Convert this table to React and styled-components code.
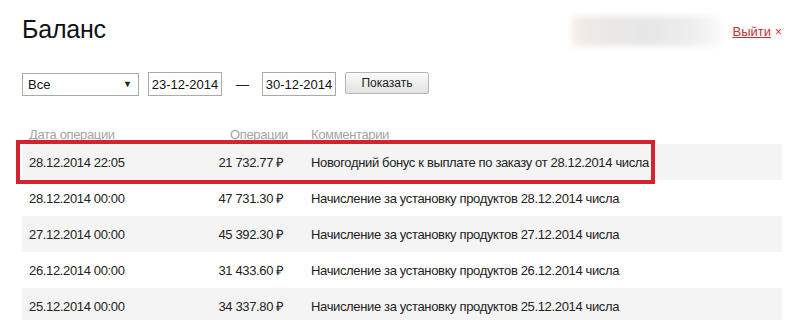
import styled, { createGlobalStyle } from 'styled-components';

const GlobalStyle = createGlobalStyle`
  body {
    margin: 0;
    background: #ffffff;
    font-family: "Liberation Sans", Arial, sans-serif;
    color: #222222;
  }
`;

const Page = styled.div`
  width: 787px;
  height: 320px;
  box-sizing: border-box;
  padding: 0 5px 0 22px;
  overflow: hidden;
`;

const Header = styled.div`
  display: flex;
  align-items: center;
  justify-content: space-between;
  height: 58px;
`;

const Title = styled.h1`
  margin: 0;
  font-size: 25px;
  font-weight: 400;
  color: #111111;
  letter-spacing: -0.2px;
`;

const UserBox = styled.div`
  display: flex;
  align-items: center;
  gap: 10px;
  padding-top: 3px;
`;

const BlurredName = styled.div`
  width: 150px;
  height: 30px;
  background: linear-gradient(90deg, #f6ede5 0%, #ebe8e6 20%, #e6e6e6 50%, #eeeeee 80%, #fafafa 100%);
  filter: blur(3px);
`;

const Logout = styled.a`
  font-size: 13px;
  color: #c4302e;
  text-decoration: underline;
  cursor: pointer;
`;

const Close = styled.span`
  font-size: 12px;
  color: #c4302e;
  margin-left: 4px;
`;

const Filters = styled.div`
  display: flex;
  align-items: center;
  margin-top: 14px;
  height: 24px;
`;

const Select = styled.div`
  width: 117px;
  height: 23px;
  box-sizing: border-box;
  border: 1px solid #a9a9a9;
  display: flex;
  align-items: center;
  justify-content: space-between;
  padding: 0 6px 0 5px;
  font-size: 13px;
  color: #111111;
`;

const Arrow = styled.span`
  font-size: 9px;
  color: #222222;
`;

const DateInput = styled.div`
  width: 74px;
  height: 24px;
  box-sizing: border-box;
  border: 1px solid #a9a9a9;
  margin-left: ${(p) => p.$left || 0}px;
  display: flex;
  align-items: center;
  justify-content: center;
  font-size: 13px;
  color: #111111;
`;

const Dash = styled.span`
  margin-left: 14px;
  font-size: 13px;
  color: #222222;
`;

const Button = styled.button`
  margin-left: 9px;
  width: 84px;
  height: 22px;
  margin-top: -2px;
  border: 1px solid #b5b5b5;
  border-radius: 2px;
  background: linear-gradient(#fbfbfb, #e2e2e2);
  font-family: inherit;
  font-size: 12px;
  color: #222222;
  padding: 0;
`;

const Table = styled.div`
  margin-top: 28px;
  width: 760px;
`;

const Row = styled.div`
  position: relative;
  display: grid;
  grid-template-columns: 130px 132px 1fr;
  align-items: center;
  height: ${(p) => (p.$head ? 20 : 36)}px;
  padding-left: 7px;
  background: ${(p) => (p.$striped ? '#f4f4f4' : 'transparent')};
  font-size: 13px;
  letter-spacing: -0.35px;
  color: ${(p) => (p.$head ? '#a5a5a5' : '#222222')};
`;

const Amount = styled.div`
  text-align: right;
  padding-right: ${(p) => (p.$head ? 3 : 7)}px;
`;

const Comment = styled.div`
  padding-left: 20px;
  white-space: nowrap;
`;

const Highlight = styled.div`
  position: absolute;
  left: -6px;
  top: -4px;
  width: 639px;
  height: 44px;
  box-sizing: border-box;
  border: 4px solid #d2232f;
  pointer-events: none;
`;

const rows = [
  { date: '28.12.2014 22:05', amount: '21 732.77 ₽', comment: 'Новогодний бонус к выплате по заказу от 28.12.2014 числа', marked: true },
  { date: '28.12.2014 00:00', amount: '47 731.30 ₽', comment: 'Начисление за установку продуктов 28.12.2014 числа' },
  { date: '27.12.2014 00:00', amount: '45 392.30 ₽', comment: 'Начисление за установку продуктов 27.12.2014 числа' },
  { date: '26.12.2014 00:00', amount: '31 433.60 ₽', comment: 'Начисление за установку продуктов 26.12.2014 числа' },
  { date: '25.12.2014 00:00', amount: '34 337.80 ₽', comment: 'Начисление за установку продуктов 25.12.2014 числа' },
];

export default function App() {
  return (
    <>
      <GlobalStyle />
      <Page>
        <Header>
          <Title>Баланс</Title>
          <UserBox>
            <BlurredName />
            <div>
              <Logout>Выйти</Logout>
              <Close>×</Close>
            </div>
          </UserBox>
        </Header>
        <Filters>
          <Select>
            <span>Все</span>
            <Arrow>▼</Arrow>
          </Select>
          <DateInput $left={9}>23-12-2014</DateInput>
          <Dash>—</Dash>
          <DateInput $left={13}>30-12-2014</DateInput>
          <Button>Показать</Button>
        </Filters>
        <Table>
          <Row $head>
            <div>Дата операции</div>
            <Amount $head>Операции</Amount>
            <Comment>Комментарии</Comment>
          </Row>
          {rows.map((r, i) => (
            <Row key={i} $striped={i % 2 === 0}>
              <div>{r.date}</div>
              <Amount>{r.amount}</Amount>
              <Comment>{r.comment}</Comment>
              {r.marked && <Highlight />}
            </Row>
          ))}
        </Table>
      </Page>
    </>
  );
}
